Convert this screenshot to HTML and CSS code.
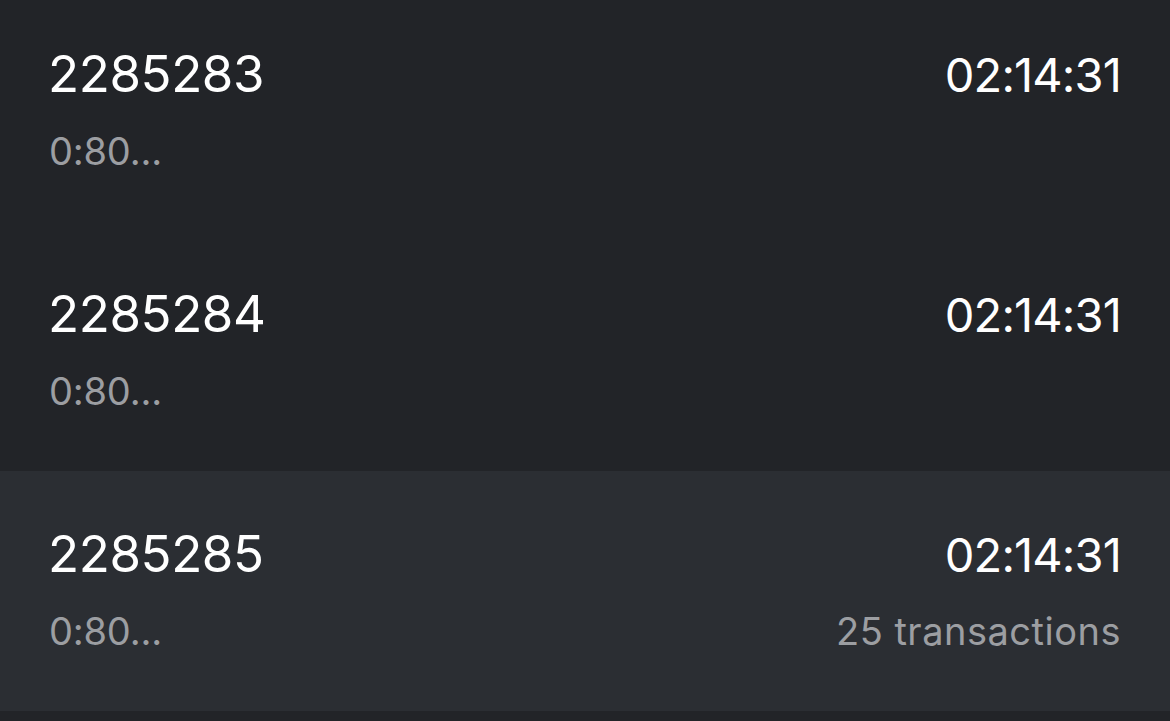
FILE: index.html
```html
<!DOCTYPE html>
<html>
<head>
<meta charset="utf-8">
<link rel="stylesheet" href="styles.css">
</head>
<body>
<div class="list">
  <div class="row">
    <div class="line">
      <span class="num">2285283</span>
      <span class="time">02:14:31</span>
    </div>
    <div class="line sub">
      <span class="addr">0:80...</span>
      <span></span>
    </div>
  </div>
  <div class="row">
    <div class="line">
      <span class="num">2285284</span>
      <span class="time">02:14:31</span>
    </div>
    <div class="line sub">
      <span class="addr">0:80...</span>
      <span></span>
    </div>
  </div>
  <div class="row active">
    <div class="line">
      <span class="num">2285285</span>
      <span class="time">02:14:31</span>
    </div>
    <div class="line sub">
      <span class="addr">0:80...</span>
      <span class="count">25 transactions</span>
    </div>
  </div>
</div>
</body>
</html>
```
FILE: styles.css
```css
html, body {
  margin: 0;
  padding: 0;
  background: #222428;
  height: 100%;
}
body {
  font-family: Inter, "Noto Sans", sans-serif;
  color: #ffffff;
  overflow: hidden;
}
.list {
  margin-top: -9px;
  display: flex;
  flex-direction: column;
}
.row {
  height: 240px;
  box-sizing: border-box;
  padding: 53px 49px 0 48px;
  display: flex;
  flex-direction: column;
}
.row.active {
  background: #2b2e33;
}
.line {
  display: flex;
  justify-content: space-between;
  align-items: baseline;
  font-size: 51px;
  line-height: 60px;
}
.num {
  letter-spacing: -0.4px;
}
.time {
  font-size: 47px;
  letter-spacing: -0.85px;
}
.sub {
  margin-top: 24px;
  font-size: 38px;
  line-height: 44px;
  color: #9c9ea2;
}
.addr {
  margin-left: 1px;
  letter-spacing: -0.2px;
}
.count {
  letter-spacing: 0.5px;
}
```
